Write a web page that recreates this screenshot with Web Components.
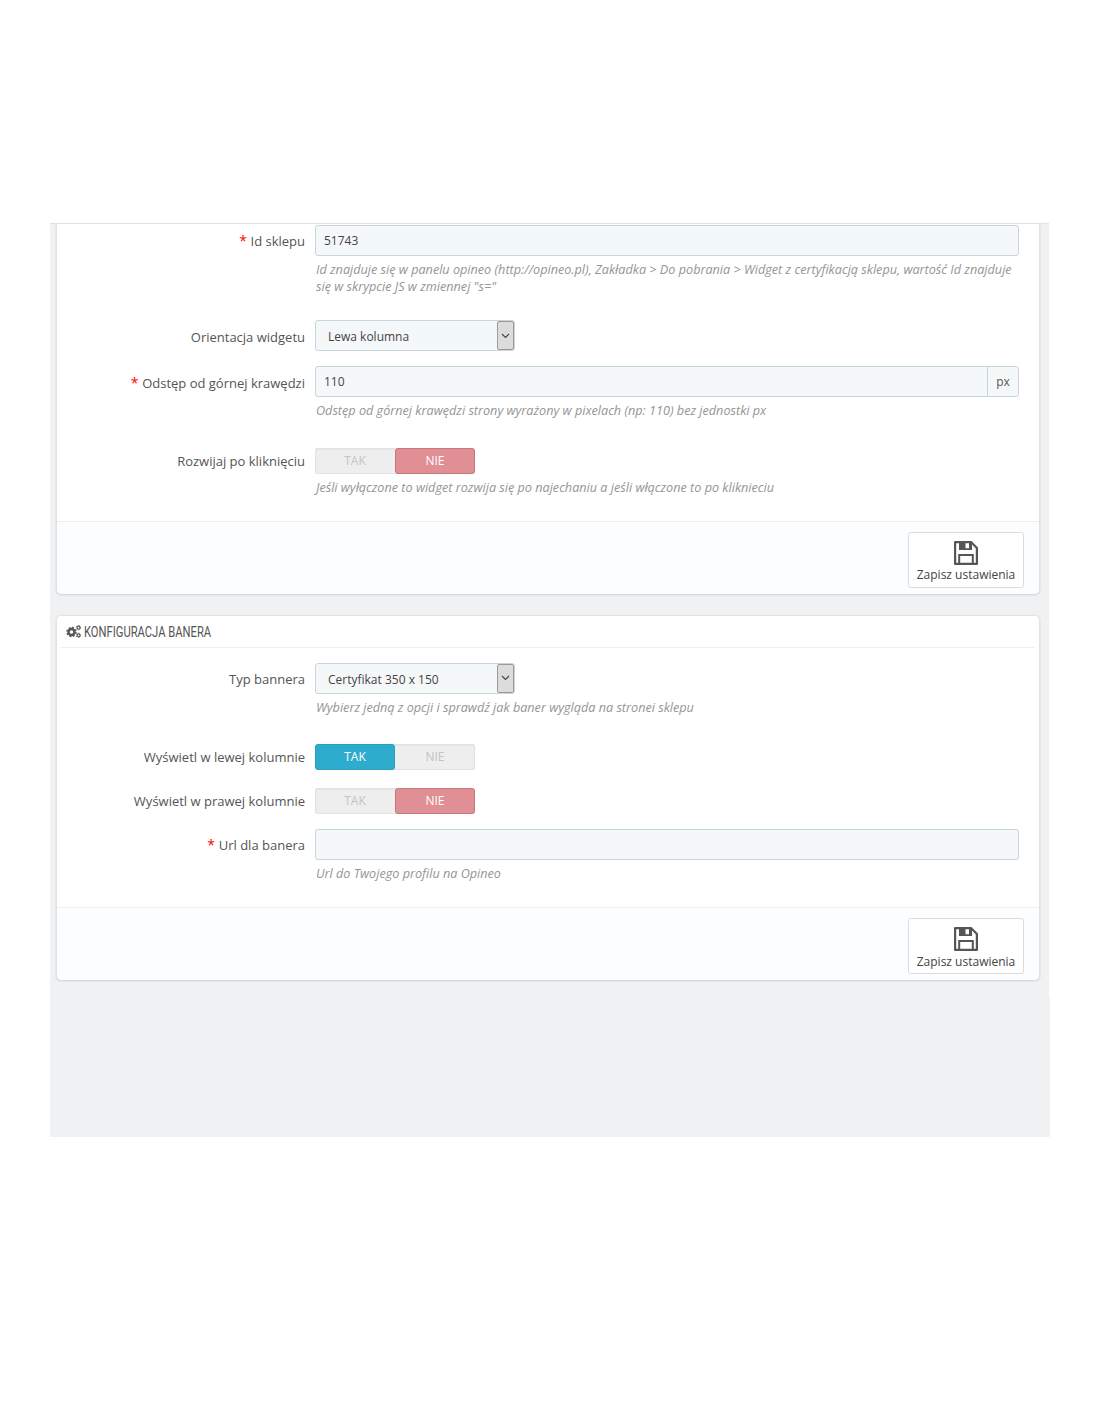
<!DOCTYPE html>
<html lang="pl"><head><meta charset="utf-8"><title>Opineo</title>
<style>
html,body{margin:0;padding:0;background:#fff}
body{font:13px/1.42857 "Open Sans",sans-serif;color:#555}
</style></head><body>
<template id="t-page"><style>
:host{display:block;width:1000px;margin:223px 0 285px 50px;box-sizing:border-box;height:914px;padding:1px 10px 0 6px;
background:linear-gradient(#dfe3e5,#dfe3e5) 0 0/999px 1px no-repeat,linear-gradient(#eff1f3,#eff1f3) 0 1px/999px 773px no-repeat,linear-gradient(#eff1f3,#eff1f3) 0 774px/100% 140px no-repeat}
</style><slot></slot></template>

<template id="t-panel"><style>
:host{display:block;background:#fff;border:1px solid #e1e4e6;border-bottom:0;border-radius:5px;margin-bottom:21px;width:984px;box-sizing:border-box;box-shadow:0 1px 2px rgba(0,0,0,.14)}
:host([flat]){border-top:0;border-radius:0 0 5px 5px}
.head{height:32px;margin:0 5px 0 4px;border-bottom:1px solid #eeeeee;display:flex;align-items:center;gap:3px;padding-left:5px;box-sizing:border-box}
:host([flat]) .head{display:none}
.body{padding:15px 0 0}
:host([flat]) .body{padding-top:1px}
.foot{height:73px;box-sizing:border-box;background:#fcfdfe;border-top:1px solid #eeeeee;border-radius:0 0 5px 5px;padding:10px 15px 0 0;display:flex;justify-content:flex-end;align-items:flex-start}
</style>
<div class="head"><slot name="icon"></slot><slot name="title"></slot></div>
<div class="body"><slot></slot></div>
<div class="foot"><slot name="foot"></slot></div></template>

<template id="t-title"><style>
:host{display:inline-block;font:14px/20px Roboto,"Open Sans",sans-serif;color:#555;text-transform:uppercase;white-space:nowrap;transform:scaleX(.80);transform-origin:0 50%;margin-top:2px}
</style><slot></slot></template>

<template id="t-row"><style>
:host{display:grid;grid-template-columns:248px 704px;column-gap:10px;margin-bottom:15px}
.l{text-align:right;font-size:13px;line-height:18px;padding-top:7.2px;color:#555}
.req{color:#f00;display:none;font-size:14px;line-height:10px}
:host([required]) .req{display:inline}
.c{min-width:0}
</style><div class="l"><span class="req">* </span><slot name="label"></slot></div><div class="c"><slot></slot></div></template>

<template id="t-help"><style>
:host{display:block;margin:5px 0 10px;font:italic 12.65px/17.2px "Open Sans",sans-serif;color:#959595;padding-left:1px}
</style><slot></slot></template>

<template id="t-input"><style>
:host{display:flex;height:31px;box-sizing:border-box;background:#f5f8f9;border:1px solid #c7d6db;border-radius:3px;font-size:12px;line-height:29px;color:#555}
.v{flex:1;padding-left:8px;color:#444}
.a{display:none;width:30px;border-left:1px solid #c7d6db;background:#f5f8f9;text-align:center;color:#555;font-size:12px;line-height:30px;border-radius:0 3px 3px 0}
:host([addon]) .a{display:block}
</style><div class="v"><slot></slot></div><div class="a"></div></template>

<template id="t-select"><style>
:host{display:flex;width:200px;height:31px;box-sizing:border-box;background:#f5f8f9;border:1px solid #c7d6db;border-radius:3px;font-size:12px;line-height:31px;color:#444}
.v{flex:1;padding-left:12px}
.a{width:15px;background:#dcdcdc;border:1px solid #9a9a9a;border-radius:2px;display:flex;align-items:center;justify-content:center}
svg{display:block}
</style><div class="v"><slot></slot></div><div class="a"><svg width="9" height="6" viewBox="0 0 9 6"><path d="M1 1l3.500 3.500L8 1" fill="none" stroke="#444" stroke-width="1.100"/></svg></div></template>

<template id="t-switch"><style>
:host{display:flex;width:160px;height:26px;margin-top:3px;border-radius:3px;background:#eeeeee;box-shadow:inset 0 0 0 1px #e2e2e2,inset 0 1px 2px rgba(0,0,0,.1);font-size:12px;line-height:26px;text-align:center;color:#c4c4c4}
span{flex:0 0 80px;box-sizing:border-box;border-radius:3px}
:host([value=yes]) .y{background:#2eacce;color:#fff;border:1px solid #2a9ebd;line-height:24px}
:host([value=no]) .n{background:#e08f95;color:#fff;border:1px solid #c9757c;line-height:24px}
</style><span class="y">TAK</span><span class="n">NIE</span></template>

<template id="t-save"><style>
:host{display:flex;flex-direction:column;align-items:center;width:116px;height:56px;box-sizing:border-box;background:#fff;border:1px solid #dcdcdc;border-radius:3px;font-size:12px;line-height:17px;color:#444;padding-top:8px}
svg{display:block;margin-bottom:1.3px}
</style><svg width="24" height="24" viewBox="0 0 24 24"><path fill="#555" fill-rule="evenodd" d="M1 0H17.500L24 6.500V23a1 1 0 0 1-1 1H1a1 1 0 0 1-1-1V1a1 1 0 0 1 1-1ZM2.200 2.200V21.800H4.200V13H19.800V21.800H21.800V7.400L18 3.600V9H5V2.200ZM6.200 15V21.800H17.800V15ZM11.500 2.200V7.300H15V2.200Z"/></svg><slot></slot></template>

<template id="t-cogs"><style>:host{display:block;height:13px;width:15px;margin-top:1px}svg{display:block}</style>
<svg width="15" height="13" viewBox="0 0 15 13"><circle cx="5.500" cy="7" r="3" fill="none" stroke="#555" stroke-width="2.400"/><circle cx="5.500" cy="7" r="4.500" fill="none" stroke="#555" stroke-width="1.400" stroke-dasharray="2 1.534"/><circle cx="12.500" cy="2.700" r="1.500" fill="none" stroke="#555" stroke-width="1.200"/><circle cx="12.500" cy="2.700" r="2.300" fill="none" stroke="#555" stroke-width=".8" stroke-dasharray="1.100 1.310"/><circle cx="12.500" cy="10.300" r="1.500" fill="none" stroke="#555" stroke-width="1.200"/><circle cx="12.500" cy="10.300" r="2.300" fill="none" stroke="#555" stroke-width=".8" stroke-dasharray="1.100 1.310"/></svg></template>

<x-page>
<x-panel flat>
  <x-row required><span slot="label">Id sklepu</span><x-input>51743</x-input><x-help>Id znajduje się w panelu opineo (http://opineo.pl), Zakładka &gt; Do pobrania &gt; Widget z certyfikacją sklepu, wartość Id znajduje się w skrypcie JS w zmiennej "s="</x-help></x-row>
  <x-row><span slot="label">Orientacja widgetu</span><x-select>Lewa kolumna</x-select></x-row>
  <x-row required><span slot="label">Odstęp od górnej krawędzi</span><x-input addon="px">110</x-input><x-help>Odstęp od górnej krawędzi strony wyrażony w pixelach (np: 110) bez jednostki px</x-help></x-row>
  <x-row><span slot="label">Rozwijaj po kliknięciu</span><x-switch value="no"></x-switch><x-help>Jeśli wyłączone to widget rozwija się po najechaniu a jeśli włączone to po kliknieciu</x-help></x-row>
  <x-save slot="foot">Zapisz ustawienia</x-save>
</x-panel>
<x-panel>
  <x-cogs slot="icon"></x-cogs><x-title slot="title">Konfiguracja banera</x-title>
  <x-row><span slot="label">Typ bannera</span><x-select>Certyfikat 350 x 150</x-select><x-help>Wybierz jedną z opcji i sprawdź jak baner wygląda na stronei sklepu</x-help></x-row>
  <x-row><span slot="label">Wyświetl w lewej kolumnie</span><x-switch value="yes"></x-switch></x-row>
  <x-row><span slot="label">Wyświetl w prawej kolumnie</span><x-switch value="no"></x-switch></x-row>
  <x-row required><span slot="label">Url dla banera</span><x-input></x-input><x-help>Url do Twojego profilu na Opineo</x-help></x-row>
  <x-save slot="foot">Zapisz ustawienia</x-save>
</x-panel>
</x-page>
<script>
const names=['page','panel','title','row','help','input','select','switch','save','cogs'];
for(const n of names){
  customElements.define('x-'+n,class extends HTMLElement{
    constructor(){super();
      const r=this.attachShadow({mode:'open'});
      r.appendChild(document.getElementById('t-'+n).content.cloneNode(true));
      const a=r.querySelector('.a');
      if(n==='input'&&a&&this.hasAttribute('addon'))a.textContent=this.getAttribute('addon');
    }
  });
}
</script>
</body></html>
